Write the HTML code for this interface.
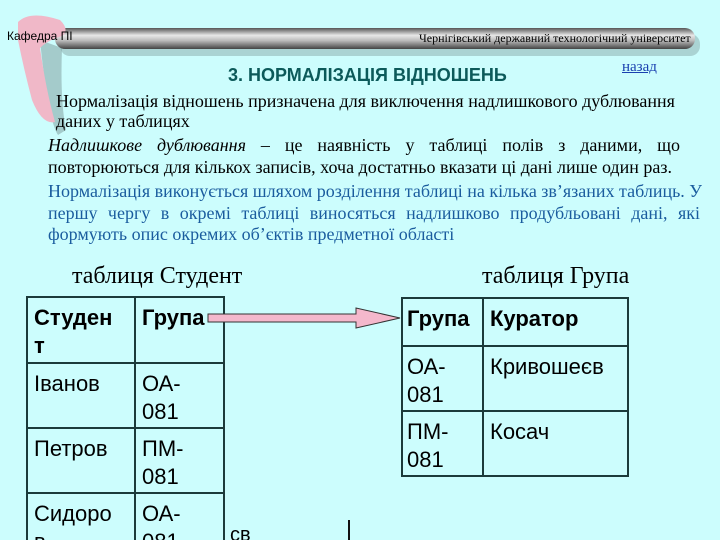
<!DOCTYPE html>
<html><head><meta charset="utf-8"><style>
html,body{margin:0;width:720px;height:540px;overflow:hidden}
body{background:#ccfdfd;position:relative;font-family:"Liberation Serif",serif}
.a{position:absolute;white-space:nowrap}
.j{position:absolute;text-align:justify;text-align-last:justify;white-space:nowrap;font-size:18px}
table{position:absolute;border-collapse:collapse;font-family:"Liberation Sans",sans-serif;font-size:22px;line-height:28px}
td{border:2px solid #1b3a3a;vertical-align:top;padding:6px 6px 0 6px}
</style></head><body>
<svg class="a" style="left:0;top:0" width="720" height="140">
<defs><linearGradient id="g" x1="0" y1="0" x2="0" y2="1"><stop offset="0" stop-color="#555"/><stop offset=".35" stop-color="#e8e8e8"/><stop offset=".6" stop-color="#bbb"/><stop offset="1" stop-color="#444"/></linearGradient></defs>
<path d="M40 40 Q48 120 58 135 L66 130 Q60 100 62 48 Z" fill="#8aa" opacity=".6"/>
<rect x="60" y="34" width="640" height="22" rx="10" fill="#8aa" opacity=".5"/>
<rect x="55" y="28" width="640" height="21" rx="10" fill="url(#g)"/>
<path d="M18 22 Q30 10 60 20 Q70 30 62 36 Q48 40 40 48 Q46 90 55 122 Q42 125 32 100 Q24 70 18 40 Z" fill="#f0b8c8"/>
</svg>
<div class="a" style="left:7px;top:29px;font:12px 'Liberation Sans',sans-serif">Кафедра ПІ</div>
<div class="a" style="left:419px;top:31px;font-size:12px">Чернігівський державний технологічний університет</div>
<div class="a" style="left:228px;top:65px;font:bold 18px 'Liberation Sans',sans-serif;color:#0c5a5a">3. НОРМАЛІЗАЦІЯ ВІДНОШЕНЬ</div>
<div class="a" style="left:622px;top:59px;font-size:15px;color:#1a40b0;text-decoration:underline">назад</div>
<div class="a" style="left:56px;top:91px;font-size:18px">Нормалізація відношень призначена для виключення надлишкового дублювання</div>
<div class="a" style="left:56px;top:111px;font-size:18px">даних у таблицях</div>
<div class="j" style="left:48px;top:135px;width:632px"><i>Надлишкове дублювання</i> – це наявність у таблиці полів з даними, що</div>
<div class="a" style="left:48px;top:157px;font-size:18px">повторюються для кількох записів, хоча достатньо вказати ці дані лише один раз.</div>
<div class="j" style="left:48px;top:181px;width:652px;color:#1a5c9e">Нормалізація виконується шляхом розділення таблиці на кілька зв’язаних таблиць. У</div>
<div class="j" style="left:48px;top:203px;width:652px;color:#1a5c9e">першу чергу в окремі таблиці виносяться надлишково продубльовані дані, які</div>
<div class="a" style="left:48px;top:224px;font-size:18px;color:#1a5c9e">формують опис окремих об’єктів предметної області</div>
<div class="a" style="left:72px;top:263px;font-size:24px">таблиця Студент</div>
<div class="a" style="left:482px;top:263px;font-size:24px">таблиця Група</div>
<table style="left:26px;top:296px">
<tr style="height:66px"><td style="width:94px"><b>Студен<br>т</b></td><td style="width:75px"><b>Група</b></td></tr>
<tr style="height:65px"><td>Іванов</td><td>ОА-<br>081</td></tr>
<tr style="height:65px"><td>Петров</td><td>ПМ-<br>081</td></tr>
<tr style="height:65px"><td>Сидоро<br>в</td><td>ОА-<br>081</td></tr>
</table>
<table style="left:401px;top:297px">
<tr style="height:48px"><td style="width:69px;padding-left:4px"><b>Група</b></td><td style="width:131px"><b>Куратор</b></td></tr>
<tr style="height:65px"><td style="padding-left:4px">ОА-<br>081</td><td>Кривошеєв</td></tr>
<tr style="height:65px"><td style="padding-left:4px">ПМ-<br>081</td><td>Косач</td></tr>
</table>
<svg class="a" style="left:200px;top:300px" width="210" height="40">
<path d="M8 14 H156 V8 L200 18 L156 28 V22 H8 Z" fill="#f4b8cc" stroke="#333" stroke-width="1"/>
</svg>
<div class="a" style="left:230px;top:524px;font:20px 'Liberation Sans',sans-serif">св</div>
<div class="a" style="left:348px;top:520px;width:2px;height:20px;background:#111"></div>
</body></html>
